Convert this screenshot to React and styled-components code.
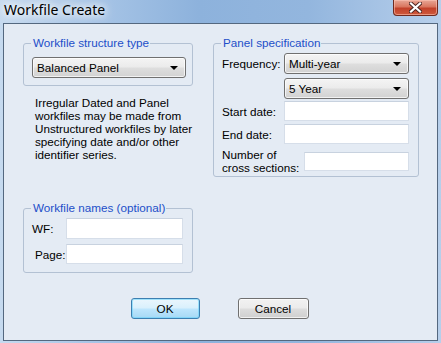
import React from "react";
import styled, {createGlobalStyle} from "styled-components";

const GlobalStyle = createGlobalStyle`
	html, body {
		margin: 0;
		padding: 0;
		background: #ffffff;
	}
	body {
		font-family: Tahoma, "Liberation Sans", "DejaVu Sans", sans-serif;
		font-size: 11.7px;
		color: #000;
	}
`

const Window = styled.div`
	width: 441px;
	height: 343px;
	box-sizing: border-box;
	display: flex;
	flex-direction: column;
	padding: 0 3px 2px 3px;
	background: linear-gradient(90deg, #c6daef 0%, #a9c6e7 20%, #8db2dc 45%, #93b6de 70%, #b7cfeb 100%);
`

const TitleBar = styled.div`
	height: 23px;
	display: flex;
	align-items: flex-start;
	justify-content: space-between;
`

const Title = styled.span`
	font-family: "Noto Sans", "Open Sans", sans-serif;
	font-size: 14px;
	line-height: 20px;
	padding-left: 1px;
	color: #000;
	text-shadow: 0 0 6px #ffffff, 0 0 10px #ffffff, 0 0 14px #eef5fc;
`

const CloseButton = styled.div`
	width: 45px;
	height: 16px;
	box-sizing: border-box;
	border: 1px solid #6f2a1f;
	border-top: none;
	border-radius: 0 0 4px 4px;
	background: linear-gradient(180deg, #e8a796 0%, #d9765f 45%, #c2412a 55%, #cf5a3c 100%);
	box-shadow: inset 0 0 0 1px rgba(255, 200, 185, 0.55);
	display: flex;
	align-items: center;
	justify-content: center;
`

const Client = styled.div`
	flex: 1;
	border: 1px solid #54687f;
	background: #e4ebf4;
	padding: 19px 0 0 19px;
	display: grid;
	grid-template-columns: 170px 206px;
	grid-template-rows: auto auto;
	column-gap: 20px;
	align-content: start;
`

const Column = styled.div`
	display: flex;
	flex-direction: column;
	align-items: stretch;
`

const GroupBox = styled.div`
	position: relative;
	box-sizing: border-box;
	border: 1px solid #b3c1d3;
	border-radius: 3px;
	padding: ${p => p.$pad};
	height: ${p => p.$h}px;
	margin-top: ${p => p.$top || 0}px;
`

const Legend = styled.span`
	position: absolute;
	top: -8px;
	left: 7px;
	padding: 0 1px 0 2px;
	background: #e4ebf4;
	color: #1d4fc9;
	line-height: 14px;
	white-space: nowrap;
`

const Select = styled.div`
	box-sizing: border-box;
	width: ${p => p.$w}px;
	height: 21px;
	border: 1px solid #707070;
	border-radius: 3px;
	background: linear-gradient(180deg, #f4f4f4 0%, #ebebeb 48%, #dedede 52%, #d2d2d2 100%);
	box-shadow: inset 0 0 0 1px rgba(255, 255, 255, 0.7);
	display: flex;
	align-items: center;
	justify-content: space-between;
	padding: 0 7px 0 4px;
	line-height: 13px;
`

const Arrow = styled.span`
	width: 0;
	height: 0;
	border-left: 4px solid transparent;
	border-right: 4px solid transparent;
	border-top: 4px solid #000;
	margin-top: 1px;
`

const Note = styled.p`
	margin: 10px 0 0 12px;
	line-height: 13px;
	width: 160px;
`

const Input = styled.div`
	box-sizing: border-box;
	width: ${p => p.$w}px;
	height: ${p => p.$h || 20}px;
	background: #fff;
	border: 1px solid #d6dee9;
	border-top-color: #c8d2df;
`

const NameGrid = styled.div`
	display: grid;
	grid-template-columns: 34px 117px;
	row-gap: 5px;
	align-items: center;
`

const Label = styled.span`
	padding-left: ${p => p.$indent || 0}px;
	line-height: 13px;
	white-space: nowrap;
`

const SpecRow = styled.div`
	display: flex;
	align-items: center;
	justify-content: space-between;
	margin-top: ${p => p.$top || 0}px;
`

const ButtonRow = styled.div`
	grid-column: 1 / span 2;
	display: flex;
	justify-content: center;
	gap: 38px;
	margin: 25px 0 0 -3px;
`

const Button = styled.div`
	box-sizing: border-box;
	width: ${p => p.$w}px;
	height: 21px;
	border: 1px solid ${p => p.$focus ? "#3c7fb1" : "#707070"};
	border-radius: 3px;
	background: ${p => p.$focus
		? "linear-gradient(180deg, #eaf6fd 0%, #d9f0fc 48%, #bee6fd 52%, #a7d9f5 100%)"
		: "linear-gradient(180deg, #f2f2f2 0%, #ebebeb 48%, #dddddd 52%, #cfcfcf 100%)"};
	box-shadow: inset 0 0 0 1px ${p => p.$focus ? "rgba(100, 210, 250, 0.55)" : "rgba(255, 255, 255, 0.7)"};
	display: flex;
	align-items: center;
	justify-content: center;
`

const App = () => {
	return (
		<Window>
			<GlobalStyle/>
			<TitleBar>
				<Title>Workfile Create</Title>
				<CloseButton>
					<svg width="13" height="11" viewBox="0 0 13 11">
						<path d="M2 1.5 L11 9.5 M11 1.5 L2 9.5" stroke="#4a2420" strokeWidth="4" strokeLinecap="square"/>
						<path d="M2 1.5 L11 9.5 M11 1.5 L2 9.5" stroke="#ffffff" strokeWidth="2.2" strokeLinecap="square"/>
					</svg>
				</CloseButton>
			</TitleBar>
			<Client>
				<Column>
					<GroupBox $h={43} $pad="13px 6px 7px 8px">
						<Legend>Workfile structure type</Legend>
						<Select $w={154}>Balanced Panel<Arrow/></Select>
					</GroupBox>
					<Note>
						Irregular Dated and Panel workfiles may be made from Unstructured workfiles by later
						specifying date and/or other identifier series.
					</Note>
					<GroupBox $h={65} $top={47} $pad="9px 8px 8px 8px">
						<Legend>Workfile names (optional)</Legend>
						<NameGrid>
							<Label>WF:</Label>
							<Input $w={117} $h={21}/>
							<Label $indent={3}>Page:</Label>
							<Input $w={117}/>
						</NameGrid>
					</GroupBox>
				</Column>
				<GroupBox $h={134} $pad="9px 9px 7px 8px">
					<Legend>Panel specification</Legend>
					<SpecRow>
						<Label>Frequency:</Label>
						<Select $w={125}>Multi-year<Arrow/></Select>
					</SpecRow>
					<SpecRow $top={4}>
						<span/>
						<Select $w={125}>5 Year<Arrow/></Select>
					</SpecRow>
					<SpecRow $top={2}>
						<Label>Start date:</Label>
						<Input $w={125}/>
					</SpecRow>
					<SpecRow $top={3}>
						<Label>End date:</Label>
						<Input $w={125}/>
					</SpecRow>
					<SpecRow $top={4}>
						<Label>Number of<br/>cross sections:</Label>
						<Input $w={105} $h={19}/>
					</SpecRow>
				</GroupBox>
				<ButtonRow>
					<Button $w={69} $focus>OK</Button>
					<Button $w={71}>Cancel</Button>
				</ButtonRow>
			</Client>
		</Window>
	);
}

export default App;
